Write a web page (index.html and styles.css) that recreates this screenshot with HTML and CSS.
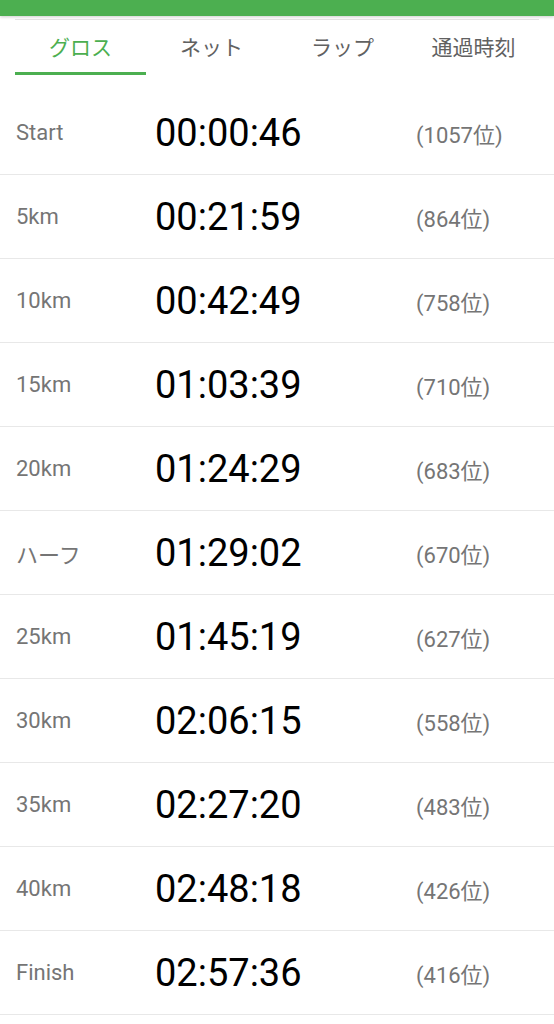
FILE: index.html
```html
<!DOCTYPE html>
<html lang="ja">
<head>
	<meta charset="UTF-8">
	<title>通過タイム</title>
	<link rel="stylesheet" href="styles.css">
</head>
<body>
	<div class="topbar"></div>

	<div class="tabs">
		<div class="tab active">グロス</div>
		<div class="tab">ネット</div>
		<div class="tab">ラップ</div>
		<div class="tab">通過時刻</div>
	</div>

	<ul class="splits">
		<li class="split"><span class="point">Start</span><span class="time">00:00:46</span><span class="rank">(1057位)</span></li>
		<li class="split"><span class="point">5km</span><span class="time">00:21:59</span><span class="rank">(864位)</span></li>
		<li class="split"><span class="point">10km</span><span class="time">00:42:49</span><span class="rank">(758位)</span></li>
		<li class="split"><span class="point">15km</span><span class="time">01:03:39</span><span class="rank">(710位)</span></li>
		<li class="split"><span class="point">20km</span><span class="time">01:24:29</span><span class="rank">(683位)</span></li>
		<li class="split"><span class="point">ハーフ</span><span class="time">01:29:02</span><span class="rank">(670位)</span></li>
		<li class="split"><span class="point">25km</span><span class="time">01:45:19</span><span class="rank">(627位)</span></li>
		<li class="split"><span class="point">30km</span><span class="time">02:06:15</span><span class="rank">(558位)</span></li>
		<li class="split"><span class="point">35km</span><span class="time">02:27:20</span><span class="rank">(483位)</span></li>
		<li class="split"><span class="point">40km</span><span class="time">02:48:18</span><span class="rank">(426位)</span></li>
		<li class="split"><span class="point">Finish</span><span class="time">02:57:36</span><span class="rank">(416位)</span></li>
	</ul>
</body>
</html>
```

FILE: styles.css
```css
body {
	margin: 0;
	background-color: white;
	font-family: Roboto, "Noto Sans CJK JP", sans-serif;
	color: #222;
}

.topbar {
	height: 16px;
	background-color: #4caf50;
	box-shadow: 0 1px 3px rgba(0, 0, 0, 0.2);
}

.tabs {
	display: grid;
	grid-template-columns: repeat(4, 1fr);
	margin: 3px 15px 0 15px;
	border-top: 1px solid #e2e2e2;
}

.tab {
	height: 48px;
	line-height: 48px;
	padding-top: 4px;
	text-align: center;
	font-size: 21px;
	color: #616161;
	border-bottom: 3px solid transparent;
}

.tab.active {
	color: #4caf50;
	border-bottom-color: #4caf50;
}

.splits {
	list-style-type: none;
	margin: 16px 0 0 0;
	padding: 0;
}

.split {
	display: grid;
	grid-template-columns: 139px 261px 1fr;
	align-items: center;
	height: 83px;
	padding-left: 16px;
	border-bottom: 1px solid #e8e8e8;
}

.point {
	font-size: 22px;
	color: #757575;
}

.time {
	font-size: 38px;
	color: #000;
}

.rank {
	font-size: 22px;
	color: #757575;
}
```
